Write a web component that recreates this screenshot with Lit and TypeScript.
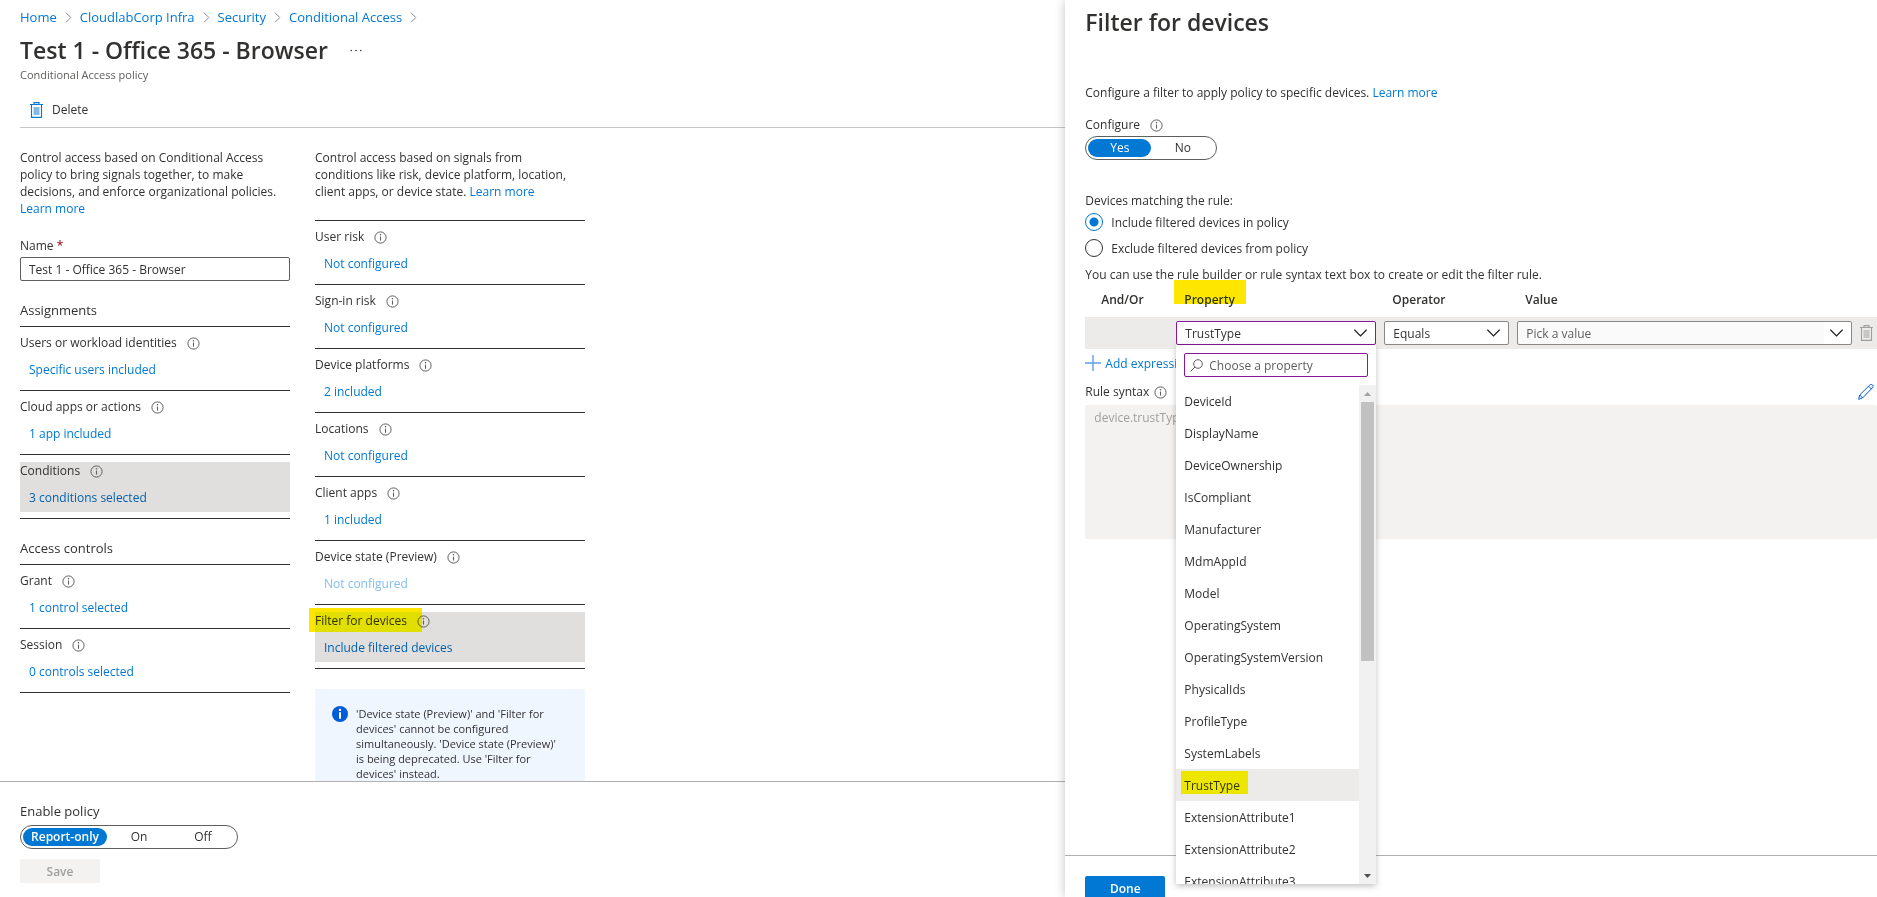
import { LitElement, html, css, svg, nothing } from "lit";
import { customElement, property, state } from "lit/decorators.js";
import { classMap } from "lit/directives/class-map.js";

const base = css`
  * { box-sizing: border-box; }
  button, input, select, textarea { font: inherit; color: inherit; margin: 0; }
  button { background: none; border: 0; padding: 0; cursor: pointer; }
  h1, h2, h3, p, ul, ol { margin: 0; padding: 0; font-weight: 400; }
  ul, ol { list-style: none; }
  a { color: #0078d4; text-decoration: none; }
  svg { display: block; flex: none; }
`;

const infoIcon = html`<svg width="13" height="13" viewBox="0 0 13 13" fill="none" role="img" aria-label="Info">
  <circle cx="6.5" cy="6.5" r="5.6" stroke="#605e5c" stroke-width="1"/>
  <path d="M6.5 5.6v4" stroke="#605e5c" stroke-width="1.1"/><circle cx="6.5" cy="3.7" r=".8" fill="#605e5c"/>
</svg>`;

const crumbChevron = html`<svg width="7" height="11" viewBox="0 0 7 11" fill="none" aria-hidden="true">
  <path d="M1 .7l4.8 4.8L1 10.3" stroke="#8a8886"/></svg>`;

const downChevron = html`<svg class="chev" width="13" height="8" viewBox="0 0 13 8" fill="none" aria-hidden="true">
  <path d="M.4.7l6.1 6.1L12.6.7" stroke="#201f1e" stroke-width="1.2"/></svg>`;

const trash = (line: string, fill: string) => html`<svg width="13" height="16" viewBox="0 0 13 16" fill="none" aria-hidden="true">
  ${svg`<path d="M0 2.5h13M4 2V.6h5V2M1.5 2.5v12.9h10V2.5" stroke=${line} stroke-width="1.1"/>
  <rect x="3.5" y="5" width="6" height="8" fill=${fill}/>`}</svg>`;

@customElement("segment-toggle")
class SegmentToggle extends LitElement {
  @property({ attribute: false }) options: { text: string; size: string }[] = [];
  @property() value = "";
  @property() label = "";
  static styles = [base, css`
    :host { display: flex; }
    .track { display: flex; height: 24px; padding: 2px; border: 1px solid #605e5c; border-radius: 12px; }
    .opt { width: 64px; height: 18px; border-radius: 9px; line-height: 18px; text-align: center; }
    .half { width: 63px; }
    .wide { width: 84px; }
    .on { background: #0078d4; color: #fff; }
    .strong { font-weight: 600; }
  `];
  render() {
    return html`<div class="track" role="radiogroup" aria-label=${this.label}>
      ${this.options.map((o) => html`<button role="radio" aria-checked=${o.text === this.value}
        class=${classMap({ opt: true, wide: o.size === "wide", half: o.size === "half", on: o.text === this.value, strong: o.size === "wide" })}
        @click=${() => (this.value = o.text)}>${o.text}</button>`)}
    </div>`;
  }
}

@customElement("setting-row")
class SettingRow extends LitElement {
  @property() name = "";
  @property() value = "";
  @property({ type: Boolean }) selected = false;
  @property({ type: Boolean }) disabled = false;
  @property({ type: Boolean }) marked = false;
  static styles = [base, css`
    :host { display: block; padding: 7px 0 6px; border-bottom: 1px solid #323130; }
    .box { position: relative; padding-bottom: 5px; }
    .selected { background: #e1dfdd; }
    .name { display: flex; align-items: center; gap: 10px; line-height: 18px; }
    .value { display: block; margin: 9px 0 0 9px; line-height: 18px; color: #0078d4; }
    .selected .value { color: #0061b0; }
    .disabled .value { color: #83bdea; }
    .marker { position: absolute; left: -6px; top: -4px; width: 113px; height: 24px; background: #ffe600; mix-blend-mode: darken; }
  `];
  render() {
    return html`<div class=${classMap({ box: true, selected: this.selected, disabled: this.disabled })}>
      <div class="name"><span>${this.name}</span>${infoIcon}</div>
      <a class="value" href="#">${this.value}</a>
      ${this.marked ? html`<span class="marker"></span>` : nothing}
    </div>`;
  }
}

@customElement("policy-blade")
class PolicyBlade extends LitElement {
  static styles = [base, css`
    :host { display: flex; flex-direction: column; height: 100%; min-width: 0; }
    .head { padding: 8px 0 0 20px; }
    .crumbs { display: flex; align-items: center; gap: 8px; line-height: 18px; font-size: 13px; }
    .crumbs li { display: flex; align-items: center; gap: 8px; }
    .title { display: flex; align-items: center; gap: 22px; margin-top: 8px; }
    h1 { font-size: 23px; line-height: 32px; font-weight: 600; }
    .sub { margin-top: 1px; font-size: 11px; line-height: 16px; color: #605e5c; }
    .bar { display: flex; align-items: center; margin-top: 9px; height: 36px; padding-left: 10px; border-bottom: 1px solid #c8c6c4; }
    .del { display: flex; align-items: center; gap: 9px; }
    .body { flex: 1; min-height: 0; overflow: hidden; display: flex; gap: 25px; padding: 21px 0 0 20px; }
    .col { width: 270px; flex: none; }
    .col p { line-height: 17px; padding-right: 6px; }
    .name { display: block; margin-top: 20px; line-height: 18px; }
    .req { color: #a4262c; font-weight: 600; }
    .text { display: block; width: 100%; height: 24px; margin-top: 2px; padding: 0 8px; border: 1px solid #605e5c; border-radius: 2px; }
    h2 { font-size: 13px; line-height: 20px; margin: 19px 0 6px; }
    .rows { border-top: 1px solid #323130; }
    .signals { margin-top: 20px; }
    .note { display: flex; gap: 8px; margin-top: 20px; padding: 17px 20px 20px 17px; background: #f0f6ff; font-size: 11px; line-height: 15px; }
    .foot { flex: none; padding: 19px 20px 14px; border-top: 1px solid #b3b0ad; }
    .foot .lab { line-height: 20px; font-size: 13px; }
    segment-toggle { margin: 4px 0 10px; }
    .save { width: 80px; height: 24px; border-radius: 2px; background: #f3f2f1; color: #a19f9d; font-weight: 600; }
  `];
  render() {
    return html`
      <header class="head">
        <nav aria-label="Breadcrumb"><ol class="crumbs">
          ${["Home", "CloudlabCorp Infra", "Security", "Conditional Access"].map((c) => html`<li><a href="#">${c}</a>${crumbChevron}</li>`)}
        </ol></nav>
        <div class="title"><h1>Test 1 - Office 365 - Browser</h1>
          <button aria-label="More"><svg width="12" height="3" viewBox="0 0 12 3" fill="#323130"><circle cx="1.2" cy="1.5" r=".8"/><circle cx="6" cy="1.5" r=".8"/><circle cx="10.8" cy="1.5" r=".8"/></svg></button>
        </div>
        <div class="sub">Conditional Access policy</div>
        <div class="bar"><button class="del">${trash("#0078d4", "#83b9eb")}<span>Delete</span></button></div>
      </header>
      <main class="body">
        <section class="col">
          <p>Control access based on Conditional Access policy to bring signals together, to make decisions, and enforce organizational policies. <a href="#">Learn more</a></p>
          <label class="name" for="policy-name">Name <span class="req">*</span></label>
          <input class="text" id="policy-name" value="Test 1 - Office 365 - Browser">
          <h2>Assignments</h2>
          <div class="rows">
            <setting-row name="Users or workload identities" value="Specific users included"></setting-row>
            <setting-row name="Cloud apps or actions" value="1 app included"></setting-row>
            <setting-row name="Conditions" value="3 conditions selected" selected></setting-row>
          </div>
          <h2>Access controls</h2>
          <div class="rows">
            <setting-row name="Grant" value="1 control selected"></setting-row>
            <setting-row name="Session" value="0 controls selected"></setting-row>
          </div>
        </section>
        <section class="col">
          <p>Control access based on signals from conditions like risk, device platform, location, client apps, or device state. <a href="#">Learn more</a></p>
          <div class="rows signals">
            <setting-row name="User risk" value="Not configured"></setting-row>
            <setting-row name="Sign-in risk" value="Not configured"></setting-row>
            <setting-row name="Device platforms" value="2 included"></setting-row>
            <setting-row name="Locations" value="Not configured"></setting-row>
            <setting-row name="Client apps" value="1 included"></setting-row>
            <setting-row name="Device state (Preview)" value="Not configured" disabled></setting-row>
            <setting-row name="Filter for devices" value="Include filtered devices" selected marked></setting-row>
          </div>
          <div class="note">
            <svg width="16" height="16" viewBox="0 0 16 16" aria-hidden="true"><circle cx="8" cy="8" r="8" fill="#015cda"/><circle cx="8" cy="3.9" r="1.2" fill="#fff"/><path d="M7 6.3h2v6.4H7z" fill="#fff"/></svg>
            <span>'Device state (Preview)' and 'Filter for devices' cannot be configured simultaneously. 'Device state (Preview)' is being deprecated. Use 'Filter for devices' instead.</span>
          </div>
        </section>
      </main>
      <footer class="foot">
        <div class="lab">Enable policy</div>
        <segment-toggle label="Enable policy" value="Report-only" .options=${[{ text: "Report-only", size: "wide" }, { text: "On", size: "" }, { text: "Off", size: "" }]}></segment-toggle>
        <button class="save" disabled>Save</button>
      </footer>`;
  }
}

const PROPERTIES = ["DeviceId", "DisplayName", "DeviceOwnership", "IsCompliant", "Manufacturer", "MdmAppId", "Model",
  "OperatingSystem", "OperatingSystemVersion", "PhysicalIds", "ProfileType", "SystemLabels", "TrustType",
  "ExtensionAttribute1", "ExtensionAttribute2", "ExtensionAttribute3"];

@customElement("property-menu")
class PropertyMenu extends LitElement {
  @property() value = "";
  static styles = [base, css`
    :host { display: block; background: #fff; padding-top: 8px; box-shadow: 0 2px 6px rgba(0, 0, 0, .25); }
    .search { display: flex; align-items: center; gap: 6px; height: 24px; margin: 0 8px 8px; padding: 0 5px; border: 1px solid #881798; border-radius: 2px; }
    .search input { flex: 1; min-width: 0; border: 0; padding: 0; outline: 0; background: none; }
    .search input::placeholder { color: #605e5c; opacity: 1; }
    .view { display: flex; height: 499px; overflow: hidden; }
    .list { flex: 1; min-width: 0; }
    .item { position: relative; height: 32px; line-height: 30px; padding: 2px 0 0 8px; }
    .current { background: #edebe9; }
    .marker { position: absolute; left: 5px; top: 2px; width: 67px; height: 23px; background: #ffe600; mix-blend-mode: darken; }
    .scroll { width: 17px; display: flex; flex-direction: column; align-items: center; background: #f1f1f1; }
    .thumb { width: 13px; flex: 1; margin-bottom: 206px; background: #c1c1c1; }
    .arrow { height: 17px; display: grid; place-items: center; }
  `];
  render() {
    return html`
      <div class="search">
        <svg width="13" height="13" viewBox="0 0 13 13" fill="none" stroke="#605e5c" aria-hidden="true"><circle cx="8" cy="5" r="4.3"/><path d="M5 8L.5 12.5"/></svg>
        <input aria-label="Choose a property" placeholder="Choose a property">
      </div>
      <div class="view">
        <ul class="list" role="listbox" aria-label="Property">
          ${PROPERTIES.map((p) => html`<li role="option" aria-selected=${p === this.value} class=${classMap({ item: true, current: p === this.value })}>${p}${p === this.value ? html`<span class="marker"></span>` : nothing}</li>`)}
        </ul>
        <div class="scroll" aria-hidden="true">
          <span class="arrow"><svg width="7" height="4" viewBox="0 0 7 4"><path d="M0 4l3.5-4L7 4z" fill="#a3a3a3"/></svg></span>
          <span class="thumb"></span>
          <span class="arrow"><svg width="7" height="4" viewBox="0 0 7 4"><path d="M0 0l3.5 4L7 0z" fill="#505050"/></svg></span>
        </div>
      </div>`;
  }
}

@customElement("filter-panel")
class FilterPanel extends LitElement {
  @state() private chosen = "TrustType";
  static styles = [base, css`
    :host { display: flex; flex-direction: column; height: 100%; min-width: 0; background: #fff; box-shadow: 0 0 10px rgba(0, 0, 0, .24); }
    .body { flex: 1; min-height: 0; padding: 6px 0 0 20px; }
    h2 { font-size: 23px; line-height: 32px; font-weight: 600; }
    .intro { margin-top: 46px; line-height: 17px; }
    .lab { display: flex; align-items: center; gap: 10px; line-height: 18px; }
    .configure { margin-top: 15px; }
    segment-toggle { margin: 2px 0 32px; }
    .radio { display: flex; align-items: center; gap: 8px; height: 18px; margin: 3px 0 8px; }
    .radio + .radio { margin: 0 0 9px; }
    .radio input { appearance: none; width: 18px; height: 18px; border: 1px solid #323130; border-radius: 50%; }
    .radio input:checked { border-color: #0078d4; background: radial-gradient(circle, #0078d4 4px, transparent 5px); }
    .hint { line-height: 17px; }
    .grid { display: grid; grid-template-columns: 83px 200px 125px minmax(0, 1fr) 13px; column-gap: 8px; align-items: center; padding-right: 4px; }
    .heads { margin: 8px 0; line-height: 18px; font-weight: 600; }
    .heads > * { position: relative; padding-left: 8px; }
    .heads .first { padding-left: 16px; }
    .marker { position: absolute; left: -2px; top: -11px; width: 72px; height: 24px; background: #ffe600; mix-blend-mode: darken; }
    .rule { height: 32px; background: #edebe9; }
    .cell { position: relative; }
    .prop { grid-column-start: 2; }
    .cell select { display: block; appearance: none; width: 100%; height: 24px; padding: 1px 28px 0 8px; border: 1px solid #8a8886; border-radius: 2px; background: #fff; color: #323130; }
    .prop select { border-color: #881798; }
    .cell .ghost { color: #605e5c; background: linear-gradient(to left, #fff 27px, #fafafa 27px); }
    .chev { position: absolute; right: 9px; top: 8px; pointer-events: none; }
    property-menu { position: absolute; z-index: 2; top: 24px; left: 0; right: 0; }
    .add { display: flex; align-items: center; gap: 4px; height: 20px; margin-top: 4px; color: #0078d4; }
    .syntax { display: flex; justify-content: space-between; align-items: center; height: 18px; margin: 10px 0 4px; padding-right: 3px; }
    .syntax .lab { gap: 5px; }
    textarea { display: block; width: 100%; height: 134px; resize: none; border: 0; border-radius: 2px; padding: 4px 9px; line-height: 17px; background: #f3f2f1; color: #a19f9d; }
    .foot { flex: none; height: 42px; padding: 20px 20px 0; border-top: 1px solid #b3b0ad; overflow: hidden; }
    .done { width: 80px; height: 24px; border-radius: 2px; background: #0078d4; color: #fff; font-weight: 600; }
  `];
  render() {
    return html`
      <div class="body">
        <h2>Filter for devices</h2>
        <p class="intro">Configure a filter to apply policy to specific devices. <a href="#">Learn more</a></p>
        <div class="lab configure"><span>Configure</span>${infoIcon}</div>
        <segment-toggle label="Configure" value="Yes" .options=${[{ text: "Yes", size: "half" }, { text: "No", size: "half" }]}></segment-toggle>
        <div class="lab">Devices matching the rule:</div>
        <label class="radio"><input type="radio" name="mode" checked>Include filtered devices in policy</label>
        <label class="radio"><input type="radio" name="mode">Exclude filtered devices from policy</label>
        <p class="hint">You can use the rule builder or rule syntax text box to create or edit the filter rule.</p>
        <div class="grid heads">
          <span class="first">And/Or</span>
          <label for="property">Property<span class="marker"></span></label>
          <label for="operator">Operator</label>
          <label for="value">Value</label>
        </div>
        <div class="grid rule">
          <div class="cell prop">
            <select id="property">${PROPERTIES.map((p) => html`<option ?selected=${p === this.chosen}>${p}</option>`)}</select>${downChevron}
            <property-menu value=${this.chosen}></property-menu>
          </div>
          <div class="cell"><select id="operator"><option>Equals</option></select>${downChevron}</div>
          <div class="cell"><select class="ghost" id="value"><option>Pick a value</option></select>${downChevron}</div>
          <button aria-label="Remove expression">${trash("#a19f9d", "#c8c6c4")}</button>
        </div>
        <button class="add"><svg width="16" height="16" viewBox="0 0 16 16" fill="none" aria-hidden="true"><path d="M8 0v16M0 8h16" stroke="#5ea0ef" stroke-width="1.4"/></svg><span>Add expression</span></button>
        <div class="syntax">
          <label class="lab" for="syntax"><span>Rule syntax</span>${infoIcon}</label>
          <button aria-label="Edit"><svg width="16" height="16" viewBox="0 0 16 16" fill="none" stroke="#015cda" stroke-linejoin="round" aria-hidden="true"><path d="M.7 15.3l1-4.3L11.8 1c.8-.8 2-.7 2.7 0s.8 1.9 0 2.7L4.6 13.9zM1.7 11l3 3M10.6 2.2l3 3"/></svg></button>
        </div>
        <textarea id="syntax" disabled>device.trustType -eq ""</textarea>
      </div>
      <footer class="foot"><button class="done">Done</button></footer>`;
  }
}

@customElement("app-root")
class AppRoot extends LitElement {
  static styles = css`
    :host {
      display: grid; grid-template-columns: 21fr 16fr; grid-template-rows: 100%; height: 100vh; overflow: hidden;
      background: #fff; color: #323130; font-family: "Open Sans", "Noto Sans", sans-serif; font-size: 12px;
    }
  `;
  render() {
    return html`<policy-blade></policy-blade><filter-panel></filter-panel>`;
  }
}
